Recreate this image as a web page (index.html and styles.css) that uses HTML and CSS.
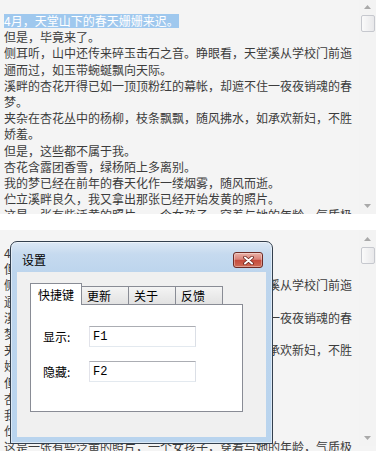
FILE: index.html
```html
<!DOCTYPE html>
<html lang="zh-CN">
<head>
<meta charset="utf-8">
<title>设置</title>
<link rel="stylesheet" href="styles.css">
</head>
<body>
<section class="viewer viewer-top">
  <div class="doc">
    <p><span class="sel">4月，天堂山下的春天姗姗来迟。</span></p>
    <p>但是，毕竟来了。</p>
    <p>侧耳听，山中还传来碎玉击石之音。睁眼看，天堂溪从学校门前迤逦而过，如玉带蜿蜒飘向天际。</p>
    <p>溪畔的杏花开得已如一顶顶粉红的幕帐，却遮不住一夜夜销魂的春梦。</p>
    <p>夹杂在杏花丛中的杨柳，枝条飘飘，随风拂水，如承欢新妇，不胜娇羞。</p>
    <p>但是，这些都不属于我。</p>
    <p>杏花含露团香雪，绿杨陌上多离别。</p>
    <p>我的梦已经在前年的春天化作一缕烟雾，随风而逝。</p>
    <p>伫立溪畔良久，我又拿出那张已经开始发黄的照片。</p>
    <p>这是一张有些泛黄的照片，一个女孩子，穿着与她的年龄，气质极不相称的衣服。</p>
  </div>
  <div class="vscroll">
    <div class="sb-btn"><svg width="7" height="4" viewBox="0 0 7 4"><path d="M0 4 L3.5 0 L7 4 Z" fill="#a9a9a9"/></svg></div>
    <div class="thumb"></div>
    <div class="sb-track"></div>
    <div class="sb-btn"><svg width="7" height="4" viewBox="0 0 7 4"><path d="M0 0 L3.5 4 L7 0 Z" fill="#a9a9a9"/></svg></div>
  </div>
</section>

<section class="viewer viewer-bottom">
  <div class="doc">
    <p>4月，天堂山下的春天姗姗来迟。</p>
    <p>但是，毕竟来了。</p>
    <p>侧耳听，山中还传来碎玉击石之音。睁眼看，天堂溪从学校门前迤逦而过，如玉带蜿蜒飘向天际。</p>
    <p>溪畔的杏花开得已如一顶顶粉红的幕帐，却遮不住一夜夜销魂的春梦。</p>
    <p>夹杂在杏花丛中的杨柳，枝条飘飘，随风拂水，如承欢新妇，不胜娇羞。</p>
    <p>但是，这些都不属于我。</p>
    <p>杏花含露团香雪，绿杨陌上多离别。</p>
    <p>我的梦已经在前年的春天化作一缕烟雾，随风而逝。</p>
    <p>伫立溪畔良久，我又拿出那张已经开始发黄的照片。</p>
    <p>这是一张有些泛黄的照片，一个女孩子，穿着与她的年龄，气质极不相称的衣服。</p>
  </div>
  <div class="vscroll">
    <div class="sb-btn"><svg width="7" height="4" viewBox="0 0 7 4"><path d="M0 4 L3.5 0 L7 4 Z" fill="#a9a9a9"/></svg></div>
    <div class="thumb"></div>
    <div class="sb-track"></div>
    <div class="sb-btn"><svg width="7" height="4" viewBox="0 0 7 4"><path d="M0 0 L3.5 4 L7 0 Z" fill="#a9a9a9"/></svg></div>
  </div>

  <div class="dialog">
    <div class="titlebar">
      <span class="title">设置</span>
      <div class="close">
        <svg width="11" height="9" viewBox="0 0 11 9">
          <path d="M2 1.5 L9 7.5 M9 1.5 L2 7.5" stroke="#6a241d" stroke-width="3.6" stroke-linecap="round"/>
          <path d="M2 1.5 L9 7.5 M9 1.5 L2 7.5" stroke="#ffffff" stroke-width="2" stroke-linecap="round"/>
        </svg>
      </div>
    </div>
    <div class="client">
      <div class="tabs">
        <div class="tab active">快捷键</div>
        <div class="tab">更新</div>
        <div class="tab">关于</div>
        <div class="tab">反馈</div>
      </div>
      <div class="tabpage">
        <div class="field"><label class="lbl">显示:</label><input class="box" type="text" value="F1"></div>
        <div class="field"><label class="lbl">隐藏:</label><input class="box" type="text" value="F2"></div>
      </div>
    </div>
  </div>
</section>
</body>
</html>
```

FILE: styles.css
```css
* { box-sizing: border-box; }
html, body { margin: 0; padding: 0; }
body {
  background: #ffffff;
  width: 378px;
  height: 451px;
  overflow: hidden;
  font-family: "Noto Sans CJK SC", "Microsoft YaHei", sans-serif;
  font-size: 12px;
}

.viewer {
  display: flex;
  align-items: flex-start;
  width: 376px;
  background: #f4f4f4;
  overflow: hidden;
}
.viewer-top { height: 216px; margin-top: -2px; }
.viewer-bottom { height: 225px; margin-top: 16px; position: relative; }

.doc {
  width: 359px;
  padding: 15px 0 0 4px;
  color: #3c3c3c;
  line-height: 16.2px;
}
.doc p { margin: 0; }
.sel {
  display: inline-block;
  vertical-align: top;
  margin-top: 1px;
  line-height: 14px;
  background: #9fc8ee;
  color: #ffffff;
}

.vscroll {
  width: 17px;
  height: 216px;
  display: flex;
  flex-direction: column;
  align-items: center;
  background: #f3f3f3;
}
.sb-btn {
  width: 17px;
  height: 17px;
  display: flex;
  align-items: center;
  justify-content: center;
}
.sb-btn svg { display: block; }
.thumb {
  width: 14px;
  height: 17px;
  border: 1px solid #c6c8ce;
  border-radius: 2px;
  background: linear-gradient(90deg, #fafafa, #e8e8ea);
}
.sb-track { flex: 1; }

/* dialog */
.dialog {
  position: absolute;
  left: 10px;
  top: 11px;
  width: 263px;
  height: 203px;
  display: flex;
  flex-direction: column;
  padding: 0 6px 6px;
  border: 1px solid #34404e;
  border-radius: 7px 7px 0 0;
  background: linear-gradient(180deg, #dce8f5 0, #c6daef 12px, #bdd5ed 30px, #b9d4ee 100%);
  box-shadow: inset 0 0 0 1px rgba(255, 255, 255, 0.5);
  color: #000000;
}
.titlebar {
  height: 30px;
  display: flex;
  align-items: flex-start;
  justify-content: space-between;
  padding: 10px 3px 0 5px;
  line-height: 16px;
}
.title { color: #000000; }
.close {
  width: 30px;
  height: 16px;
  border: 1px solid #6e2b25;
  border-radius: 3px;
  background: linear-gradient(180deg, #eab2a7 0, #d9837a 45%, #c54b3c 52%, #cf6b55 100%);
  box-shadow: inset 0 0 0 1px rgba(255, 255, 255, 0.35);
  display: flex;
  align-items: center;
  justify-content: center;
}
.close svg { display: block; }

.client {
  flex: 1;
  background: #f0f0f0;
  padding: 11px 0 0 13px;
}
.tabs {
  display: flex;
  align-items: flex-end;
  height: 21px;
}
.tab {
  width: 48px;
  height: 18px;
  margin-left: -1px;
  padding-left: 5px;
  border: 1px solid #898c95;
  border-bottom: none;
  background: linear-gradient(180deg, #f4f4f4, #e2e2e2);
  line-height: 17px;
}
.tab.active {
  width: 52px;
  height: 22px;
  margin-left: 0;
  margin-bottom: -1px;
  padding-left: 7px;
  background: #ffffff;
  line-height: 21px;
  position: relative;
  z-index: 1;
}
.tabpage {
  width: 213px;
  height: 108px;
  background: #ffffff;
  border: 1px solid #898c95;
  padding: 21px 0 0 12px;
  display: flex;
  flex-direction: column;
  gap: 14px;
}
.field {
  display: flex;
  align-items: center;
  height: 21px;
}
.lbl { width: 46px; color: #000000; }
.box {
  width: 107px;
  height: 21px;
  margin: 0;
  padding: 0 3px;
  border: 1px solid;
  border-color: #abadb3 #dbdfe6 #e3e9ef #e2e3ea;
  background: #ffffff;
  font-family: "Liberation Mono", monospace;
  font-size: 12px;
  color: #000000;
  outline: none;
}
```
